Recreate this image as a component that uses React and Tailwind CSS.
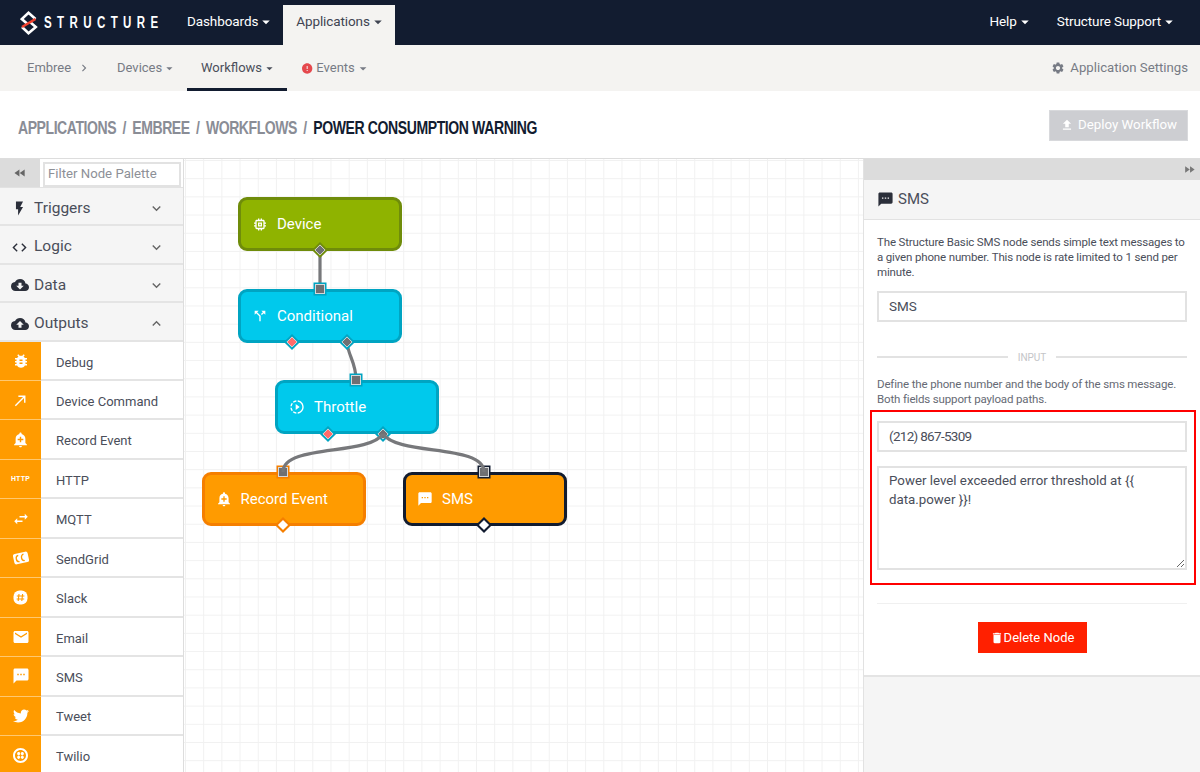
import {
  MdAddAlert, MdArrowDropDown, MdBugReport, MdCallMade, MdCallSplit, MdChevronRight, MdCloudDownload, MdCloudUpload,
  MdCode, MdDelete, MdEmail, MdError, MdFastForward, MdFastRewind, MdFileUpload, MdFlashOn,
  MdKeyboardArrowDown, MdKeyboardArrowUp, MdMemory, MdSettings, MdSlowMotionVideo, MdSms, MdSwapHoriz,
} from 'react-icons/md';
import { FaTwitter } from 'react-icons/fa';
import { SiTwilio } from 'react-icons/si';

const Logo = () => (
  <svg width="18" height="24" viewBox="0 0 18 24" className="shrink-0">
    <path d="M15.5 8 L8.5 1.8 L1.8 8 L7.5 13" fill="none" stroke="#fff" strokeWidth="2.6" />
    <path d="M2 16 L8.5 22.2 L15.8 16 L10 11" fill="none" stroke="#fff" strokeWidth="2.6" />
    <path d="M2 16 L15.5 8" stroke="#f0402e" strokeWidth="2.6" />
  </svg>
);

const SendGridIcon = () => (
  <svg width="16" height="14" viewBox="0 0 15 13">
    <g transform="rotate(-12 7.5 6.5)">
      <rect x="0.5" y="1.5" width="14" height="10" rx="2" fill="#fff" />
      <path d="M5.5 3.5 a2.5 3 0 1 0 0 6 M10.5 3.5 a2.5 3 0 1 0 0 6" fill="none" stroke="#ff9b00" strokeWidth="1.2" />
    </g>
  </svg>
);

const SlackIcon = () => (
  <svg width="15" height="15" viewBox="0 0 15 15">
    <rect x="0.5" y="0.5" width="14" height="14" rx="6" fill="#fff" />
    <path d="M6 4 L5.2 11 M9.6 4 L8.8 11 M3.8 6 L11.4 6 M3.6 9 L11.2 9" stroke="#ff9b00" strokeWidth="1.1" />
  </svg>
);

const outputs = [
  ['Debug', <MdBugReport size={18} />],
  ['Device Command', <MdCallMade size={17} />],
  ['Record Event', <MdAddAlert size={17} />],
  ['HTTP', <span className="text-[7px] font-bold tracking-[0.2px]">HTTP</span>],
  ['MQTT', <MdSwapHoriz size={18} />],
  ['SendGrid', <SendGridIcon />],
  ['Slack', <SlackIcon />],
  ['Email', <MdEmail size={18} />],
  ['SMS', <MdSms size={18} />],
  ['Tweet', <FaTwitter size={16} />],
  ['Twilio', <SiTwilio size={15} />],
];

const groups = [
  ['Triggers', <MdFlashOn size={17} />, false],
  ['Logic', <MdCode size={17} />, false],
  ['Data', <MdCloudDownload size={18} />, false],
  ['Outputs', <MdCloudUpload size={18} />, true],
];

const TopItem = ({ label, active }) => (
  <div className={`flex items-center h-10 mt-[5px] pb-[7px] px-[13px] text-[13.5px] tracking-[-0.1px] ${active ? 'w-[112px] bg-[#f4f3f1] text-[#3f4452]' : 'text-white'}`}>
    {label}
    <MdArrowDropDown size={18} className="ml-[-1px] mr-[-3px] shrink-0" />
  </div>
);

const SubItem = ({ children, active, width }) => (
  <div className={`flex items-center h-[46px] pl-[14px] pt-[3px] border-b-[3px] ${width} ${active ? 'border-[#121c30] text-[#4a4e5a]' : 'border-transparent text-[#777b85]'}`}>
    {children}
    <MdArrowDropDown size={17} className="ml-auto mr-[10px]" />
  </div>
);

const nodes = [
  { label: 'Device', icon: <MdMemory size={19} />, pos: 'left-[54px] top-[38px]', color: 'bg-[#8fb300] border-[#6f8c0a]' },
  { label: 'Conditional', icon: <MdCallSplit size={22} />, pos: 'left-[54px] top-[130px]', color: 'bg-[#00c9ec] border-[#00a4c2]' },
  { label: 'Throttle', icon: <MdSlowMotionVideo size={18} />, pos: 'left-[91px] top-[221px]', color: 'bg-[#00c9ec] border-[#00a4c2]' },
  { label: 'Record Event', icon: <MdAddAlert size={18} />, pos: 'left-[17.5px] top-[313px]', color: 'bg-[#ff9b00] border-[#f57f00]' },
  { label: 'SMS', icon: <MdSms size={20} />, pos: 'left-[219px] top-[313px]', color: 'bg-[#ff9b00] border-[#121c30]' },
];

const InPort = ({ x, y, color }) => (
  <g>
    <rect x={x - 6.5} y={y - 6.5} width="13" height="13" fill={color} />
    <rect x={x - 4.5} y={y - 4.5} width="9" height="9" fill="#6f7073" stroke="#d5d8da" strokeWidth="1" />
  </g>
);

const Diamond = ({ x, y, color, fill = '#6f7073' }) => (
  <g transform={`translate(${x} ${y}) rotate(45)`}>
    <rect x="-5.7" y="-5.7" width="11.4" height="11.4" fill={color} />
    <rect x="-3.6" y="-3.6" width="7.2" height="7.2" fill={fill} stroke={fill === '#fff' ? 'none' : '#e4e4e4'} strokeWidth="0.8" />
  </g>
);

const Canvas = () => (
  <div className="relative flex-1 overflow-hidden bg-white bg-[linear-gradient(#f1f1f1_1px,transparent_1px),linear-gradient(90deg,#f1f1f1_1px,transparent_1px)] bg-[size:18.2px_18.2px] bg-[position:1px_1px]">
    {nodes.map((n) => (
      <div key={n.label} className={`absolute ${n.pos} flex items-center w-[164px] h-[54px] pl-[11px] rounded-[9px] border-[3px] text-white text-[15px] ${n.color}`}>
        <span className="w-[16px] flex justify-center">{n.icon}</span>
        <span className="ml-[9px]">{n.label}</span>
      </div>
    ))}
    <svg className="absolute inset-0 w-full h-full" viewBox="184 159 679 613">
      <g fill="none" stroke="#77787b" strokeWidth="3.2">
        <path d="M320 250 L320 289" />
        <path d="M347 342 C348 356 356 362 356 380" />
      </g>
      <Diamond x={320} y={250} color="#6f8c0a" />
      <InPort x={320} y={289} color="#00a4c2" />
      <Diamond x={292} y={342} color="#00a4c2" fill="#ff6b6b" />
      <Diamond x={347} y={342} color="#00a4c2" />
      <InPort x={356} y={380} color="#00a4c2" />
      <Diamond x={328} y={434} color="#00a4c2" fill="#ff6b6b" />
      <Diamond x={383} y={434} color="#00a4c2" />
      <InPort x={283} y={472} color="#f57f00" />
      <InPort x={484} y={472} color="#121c30" />
      <Diamond x={283} y={525} color="#f57f00" fill="#fff" />
      <Diamond x={484} y={525} color="#121c30" fill="#fff" />
      <g fill="none" stroke="#77787b" strokeWidth="3.2">
        <path d="M383 434 C368 456 283 444 283 472" />
        <path d="M383 434 C398 456 484 444 484 472" />
      </g>
    </svg>
  </div>
);

const App = () => {
  return (
    <div className="h-[772px] overflow-hidden flex flex-col bg-white font-['Roboto',sans-serif]">
      <header className="flex h-[45px] shrink-0 bg-[#121c30]">
        <div className="flex items-center w-[174px] shrink-0 pl-[20px] gap-[6px]">
          <Logo />
          <span className="whitespace-nowrap origin-left scale-x-[0.72] text-white font-['Liberation_Sans',sans-serif] font-bold text-[16px] tracking-[7.5px]">STRUCTURE</span>
        </div>
        <div className="-mr-[2px]"><TopItem label="Dashboards" /></div>
        <TopItem label="Applications" active />
        <div className="flex-1" />
        <TopItem label="Help" />
        <div className="mr-[12px]"><TopItem label="Structure Support" /></div>
      </header>

      <nav className="flex h-[46px] shrink-0 bg-[#f4f3f1] text-[13px] pl-[13px] pr-[12px]">
        <div className="flex items-center w-[90px] h-[46px] pl-[14px] text-[#777b85]">
          Embree
          <MdChevronRight size={14} className="ml-[6px]" />
        </div>
        <SubItem width="w-[84px]">Devices</SubItem>
        <SubItem active width="w-[100px]">Workflows</SubItem>
        <SubItem width="w-[94px]"><MdError size={13} className="text-[#e5484d] mr-[3px]" />Events</SubItem>
        <div className="flex-1" />
        <div className="flex items-center gap-[5px] text-[13.2px] text-[#777b85]">
          <MdSettings size={14} />
          Application Settings
        </div>
      </nav>

      <div className="flex items-center justify-between h-[68px] shrink-0 pl-[18px] pr-[12px] border-b border-[#ddd]">
        <h1 className="mt-[7px] whitespace-nowrap origin-left scale-x-[0.738] font-['Liberation_Sans',sans-serif] text-[19px] font-bold tracking-[-0.6px] [word-spacing:4px] text-[#8a8d96]">
          APPLICATIONS / EMBREE / WORKFLOWS / <span className="tracking-[-0.53px] [word-spacing:0] text-[#121c30]">POWER CONSUMPTION WARNING</span>
        </h1>
        <button className="flex items-center justify-center w-[139px] h-[31px] mt-[1px] gap-[4px] bg-[#cdced2] text-white text-[13.3px] border border-[#d8d9dc]">
          <MdFileUpload size={14} />
          Deploy Workflow
        </button>
      </div>

      <main className="flex flex-1 min-h-0">
        <aside className="w-[184px] shrink-0 border-r border-[#ddd] text-[#4a4e5a] overflow-hidden">
          <div className="flex h-[29px] border-b border-[#e2e2e2] bg-white">
            <div className="flex items-center justify-center w-[40px] bg-[#dcdcdc] text-[#666]">
              <MdFastRewind size={14} />
            </div>
            <input readOnly placeholder="Filter Node Palette" className="w-[138px] h-[25px] mt-[3px] ml-[3px] px-[3px] pb-[2px] text-[13.2px] border-2 border-[#e2e2e2] placeholder-[#8d9097] outline-none" />
          </div>
          {groups.map(([label, icon, open]) => (
            <div key={label} className="flex items-center h-[38.4px] pl-[11px] pr-[18px] pt-[5px] bg-[#f5f5f5] border-b-2 border-[#e4e4e4] text-[15.5px]">
              <span className="w-[22px] flex justify-start text-[#2b2f3a]">{icon}</span>
              <span className="flex-1 ml-[1px]">{label}</span>
              <span className="text-[#666]">{open ? <MdKeyboardArrowUp size={17} /> : <MdKeyboardArrowDown size={17} />}</span>
            </div>
          ))}
          {outputs.map(([label, icon]) => (
            <div key={label} className="flex h-[39.45px] text-[13px]">
              <div className="flex items-center justify-center w-[41px] bg-[#ff9b00] border-b border-[#ffc870] text-white">{icon}</div>
              <div className="flex flex-1 items-center pl-[15px] pt-[4px] border-b-2 border-[#e4e4e4]">{label}</div>
            </div>
          ))}
        </aside>

        <Canvas />

        <aside className="w-[337px] shrink-0 flex flex-col border-l border-[#e2e2e2] bg-[#f5f5f5] text-[#4a4e5a]">
          <div className="flex items-center justify-end h-[21px] pr-[4px] bg-[#dcdcdc] text-[#777]">
            <MdFastForward size={13} />
          </div>
          <div className="flex items-center gap-[4px] h-[40px] pl-[13px] pb-[1px] border-b border-[#e2e2e2] text-[15px]">
            <MdSms size={17} className="text-[#2b2f3a]" />
            SMS
          </div>
          <div className="h-[457px] pl-[13px] pt-[15px] bg-white border-b-2 border-[#e4e4e4]">
            <p className="w-[310px] text-[11.5px] tracking-[-0.15px] leading-[15.2px]">
              The Structure Basic SMS node sends simple text messages to a given phone number. This node is rate limited to 1 send per minute.
            </p>
            <input readOnly defaultValue="SMS" className="block w-[310px] h-[31px] mt-[10px] px-[10px] text-[13.5px] border-2 border-[#e2e2e2] outline-none" />
            <div className="flex items-center w-[310px] gap-[10px] mt-[29px] text-[10px] leading-[13px] text-[#c4c5c8]">
              <div className="flex-1 h-[1.5px] bg-[#e2e2e2]" />
              INPUT
              <div className="flex-1 h-[1.5px] bg-[#e2e2e2]" />
            </div>
            <p className="w-[310px] mt-[13px] text-[11.5px] tracking-[-0.15px] leading-[15.2px] text-[#666a74]">
              Define the phone number and the body of the sms message. Both fields support payload paths.
            </p>
            <div className="w-[326px] -ml-[7px] mt-[3px] pl-[5px] pt-[9px] pb-[13px] border-2 border-[#ff0000]">
              <input readOnly defaultValue="(212) 867-5309" className="block w-[310px] h-[31px] px-[10px] pb-[2px] text-[13.5px] tracking-[-0.7px] border-2 border-[#e2e2e2] outline-none" />
              <textarea readOnly defaultValue="Power level exceeded error threshold at {{ data.power }}!" className="block w-[310px] h-[104px] mt-[14px] px-[10px] py-[4px] text-[13.3px] leading-[18.5px] border-2 border-[#e2e2e2] outline-none" />
            </div>
            <div className="w-[310px] h-px mt-[18px] bg-[#f0f0f0]" />
            <div className="flex justify-center w-[310px] mt-[18px]">
              <button className="flex items-center justify-center w-[109px] h-[31px] bg-[#ff2000] text-white text-[13px]">
                <MdDelete size={14} />
                Delete Node
              </button>
            </div>
          </div>
        </aside>
      </main>
    </div>
  );
};

export default App;
